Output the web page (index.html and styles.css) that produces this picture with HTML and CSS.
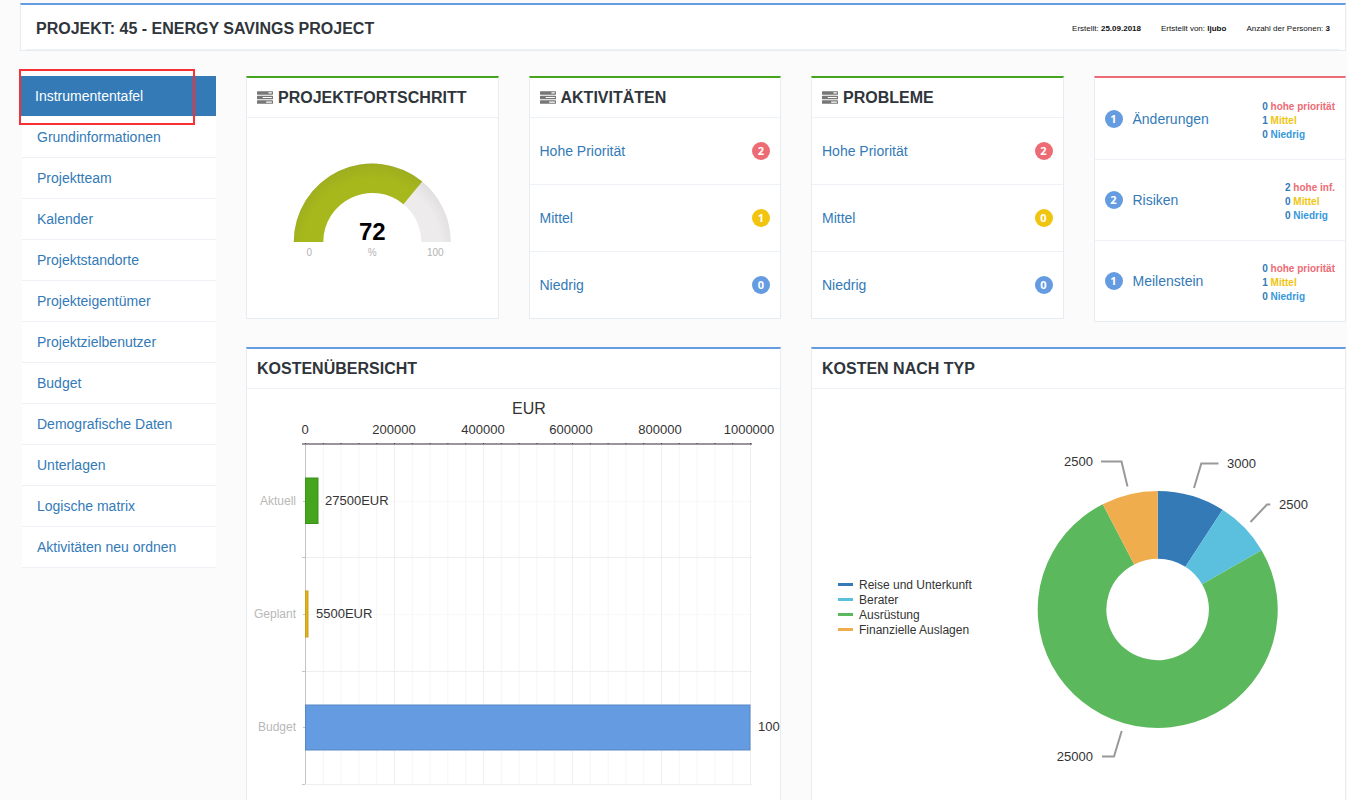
FILE: index.html
```html
<!DOCTYPE html>
<html lang="de">
<head>
<meta charset="utf-8">
<title>Projekt: 45 - Energy Savings Project</title>
<link rel="stylesheet" href="styles.css">
</head>
<body>
<svg class="defs" aria-hidden="true">
  <symbol id="tasks" viewBox="0 128 1792 1408">
    <path fill-rule="evenodd" d="M64 128h1664q64 0 64 64v256q0 64-64 64H64q-64 0-64-64V192q0-64 64-64zM1280 256v128h384V256zM64 640h1664q64 0 64 64v256q0 64-64 64H64q-64 0-64-64V704q0-64 64-64zM640 768v128h1024V768zM64 1152h1664q64 0 64 64v256q0 64-64 64H64q-64 0-64-64v-256q0-64 64-64zM1024 1280v128h640v-128z"/>
  </symbol>
</svg>
<div class="page">
  <header class="card card-blue topbar">
    <div class="topbar-inner">
      <h1 class="title">PROJEKT: 45 - ENERGY SAVINGS PROJECT</h1>
      <div class="meta">
        <span>Erstellt: <b>25.09.2018</b></span>
        <span>Ertstellt von: <b>ljubo</b></span>
        <span>Anzahl der Personen: <b>3</b></span>
      </div>
    </div>
  </header>

  <div class="layout">
    <nav class="menu">
      <a class="menu-item active" href="#">Instrumententafel</a>
      <a class="menu-item" href="#">Grundinformationen</a>
      <a class="menu-item" href="#">Projektteam</a>
      <a class="menu-item" href="#">Kalender</a>
      <a class="menu-item" href="#">Projektstandorte</a>
      <a class="menu-item" href="#">Projekteigentümer</a>
      <a class="menu-item" href="#">Projektzielbenutzer</a>
      <a class="menu-item" href="#">Budget</a>
      <a class="menu-item" href="#">Demografische Daten</a>
      <a class="menu-item" href="#">Unterlagen</a>
      <a class="menu-item" href="#">Logische matrix</a>
      <a class="menu-item" href="#">Aktivitäten neu ordnen</a>
      <div class="highlight"></div>
    </nav>

    <main class="content">
      <div class="summary">
        <section class="card card-green">
          <h2 class="card-title"><svg class="icon"><use href="#tasks"/></svg>PROJEKTFORTSCHRITT</h2>
          <svg class="gauge" viewBox="0 0 250 200">
            <defs>
              <radialGradient id="gaugeFill" gradientUnits="userSpaceOnUse" cx="125" cy="130" r="86">
                <stop offset="0.8" stop-color="#a7b81c"/><stop offset="1" stop-color="#9dac1f"/>
              </radialGradient>
              <radialGradient id="gaugeRest" gradientUnits="userSpaceOnUse" cx="125" cy="130" r="86">
                <stop offset="0.8" stop-color="#edebeb"/><stop offset="1" stop-color="#dfdddc"/>
              </radialGradient>
            </defs>
            <path fill="url(#gaugeRest)" d="M46.500 124A78.500 78.500 0 0 1 203.500 124H174A49 49 0 0 0 76 124Z"/>
            <path fill="url(#gaugeFill)" d="M46.500 124A78.500 78.500 0 0 1 175 63.500L156.200 86.200A49 49 0 0 0 76 124Z"/>
            <text class="gauge-value" x="125" y="122">72</text>
            <text class="gauge-label" x="62" y="138">0</text>
            <text class="gauge-label" x="125" y="138">%</text>
            <text class="gauge-label" x="188" y="138">100</text>
          </svg>
        </section>

        <section class="card card-green">
          <h2 class="card-title"><svg class="icon"><use href="#tasks"/></svg>AKTIVITÄTEN</h2>
          <a class="row" href="#">Hohe Priorität <span class="badge red">2</span></a>
          <a class="row" href="#">Mittel <span class="badge yellow">1</span></a>
          <a class="row" href="#">Niedrig <span class="badge blue">0</span></a>
        </section>

        <section class="card card-green">
          <h2 class="card-title"><svg class="icon"><use href="#tasks"/></svg>PROBLEME</h2>
          <a class="row" href="#">Hohe Priorität <span class="badge red">2</span></a>
          <a class="row" href="#">Mittel <span class="badge yellow">0</span></a>
          <a class="row" href="#">Niedrig <span class="badge blue">0</span></a>
        </section>

        <section class="card card-red">
          <a class="row tall" href="#">
            <span class="badge blue">1</span><span class="row-name">Änderungen</span>
            <span class="levels"><span>0 <i class="t-red">hohe priorität</i></span><span>1 <i class="t-yellow">Mittel</i></span><span>0 <i class="t-blue">Niedrig</i></span></span>
          </a>
          <a class="row tall" href="#">
            <span class="badge blue">2</span><span class="row-name">Risiken</span>
            <span class="levels"><span>2 <i class="t-red">hohe inf.</i></span><span>0 <i class="t-yellow">Mittel</i></span><span>0 <i class="t-blue">Niedrig</i></span></span>
          </a>
          <a class="row tall" href="#">
            <span class="badge blue">1</span><span class="row-name">Meilenstein</span>
            <span class="levels"><span>0 <i class="t-red">hohe priorität</i></span><span>1 <i class="t-yellow">Mittel</i></span><span>0 <i class="t-blue">Niedrig</i></span></span>
          </a>
        </section>
      </div>

      <div class="charts">
        <section class="card card-blue">
          <h2 class="card-title">KOSTENÜBERSICHT</h2>
          <svg class="chart" viewBox="0 0 533 430">
            <defs>
              <pattern id="minor" patternUnits="userSpaceOnUse" x="58" y="0" width="17.800" height="10">
                <rect width="1" height="10" fill="#f5f5f5"/>
              </pattern>
              <pattern id="ticks" patternUnits="userSpaceOnUse" x="58" y="0" width="17.800" height="430">
                <rect width="1" height="430" fill="#444"/>
              </pattern>
            </defs>
            <rect x="58" y="55" width="446" height="340" fill="url(#minor)"/>
            <path class="grid-faint" d="M58 112.500H505M58 225.500H505M58 338.500H505"/>
            <path class="grid-line" d="M147.500 55V395M236.500 55V395M325.500 55V395M414.500 55V395M503.500 55V395M58 168.500H505M58 282.500H505M58 395.500H505"/>
            <path class="axis-left" d="M58.500 55V395M55 168.500H58M55 282.500H58M55 395.500H58M56 112.500H58M56 225.500H58M56 338.500H58"/>
            <rect x="55" y="54" width="450" height="2" fill="#99959b"/>
            <rect x="58" y="54" width="446" height="1" fill="url(#ticks)"/>
            <rect x="58.500" y="89" width="12.500" height="45.500" fill="#45a51f" stroke="#3c921b"/>
            <rect x="58.500" y="202" width="2.500" height="46" fill="#dfb31d" stroke="#c9a01a"/>
            <rect x="58.500" y="316" width="444.500" height="45" fill="#659be0" stroke="#5887c4"/>
            <text class="axis-title" x="282" y="25">EUR</text>
            <g class="num mid">
              <text x="58" y="45">0</text><text x="147" y="45">200000</text><text x="236" y="45">400000</text>
              <text x="324" y="45">600000</text><text x="413" y="45">800000</text><text x="502" y="45">1000000</text>
            </g>
            <g class="cat"><text x="49" y="116">Aktuell</text><text x="49" y="229">Geplant</text><text x="49" y="342">Budget</text></g>
            <g class="num"><text x="78" y="116">27500EUR</text><text x="69" y="229">5500EUR</text><text x="511" y="342">100</text></g>
          </svg>
        </section>

        <section class="card card-blue">
          <h2 class="card-title">KOSTEN NACH TYP</h2>
          <svg class="chart" viewBox="0 0 533 430">
            <path fill="#337ab7" d="M345.700 102A120 118.500 0 0 1 410.600 120.800L373.400 177.800A51.300 50.700 0 0 0 345.700 169.800Z"/>
            <path fill="#5bc0de" d="M410.600 120.800A120 118.500 0 0 1 449.600 161.200L390.100 195.200A51.300 50.700 0 0 0 373.400 177.800Z"/>
            <path fill="#5cb85c" d="M449.600 161.200A120 118.500 0 1 1 290.700 115.200L322.200 175.400A51.300 50.700 0 1 0 390.100 195.200Z"/>
            <path fill="#f0ad4e" d="M290.700 115.200A120 118.500 0 0 1 345.700 102V169.800A51.300 50.700 0 0 0 322.200 175.400Z"/>
            <path class="leader" d="M289 72.500H309.500L315.500 97.500M382 99L389.300 74.500H406.500M438.500 133L455 115.500H458.300M290 367.500H302L309.700 342"/>
            <g class="num end"><text x="281" y="77">2500</text><text x="281" y="372">25000</text></g>
            <g class="num"><text x="415" y="79">3000</text><text x="467" y="120">2500</text></g>
            <path class="key" stroke="#337ab7" d="M26 195.500H41"/>
            <path class="key" stroke="#5bc0de" d="M26 210.500H41"/>
            <path class="key" stroke="#5cb85c" d="M26 225.500H41"/>
            <path class="key" stroke="#f0ad4e" d="M26 240.500H41"/>
            <g class="legend">
              <text x="47" y="200">Reise und Unterkunft</text><text x="47" y="215">Berater</text>
              <text x="47" y="230">Ausrüstung</text><text x="47" y="245">Finanzielle Auslagen</text>
            </g>
          </svg>
        </section>
      </div>
    </main>
  </div>
</div>
</body>
</html>
```
FILE: styles.css
```css
* { box-sizing: border-box; }
body {
  margin: 0;
  background: #fbfbfb;
  color: #2f353b;
  font: 14px/20px "Liberation Sans", Arial, sans-serif;
}
a { color: #337ab7; text-decoration: none; }
.defs { display: block; width: 0; height: 0; }
.page { padding: 3px 1px 20px 20px; }

.card {
  background: #fff;
  border: 1px solid #e7ecf1;
  border-top-width: 2px;
}
.card-blue { border-top-color: #659be0; }
.card-green { border-top-color: #45a51f; }
.card-red { border-top-color: #ed6b75; }

.topbar { padding: 0 5px; }
.topbar-inner {
  display: flex;
  align-items: center;
  justify-content: space-between;
  min-height: 45px;
  padding: 4px 10px 0;
  border-bottom: 1px solid #eef1f5;
}
.title { margin: 0; font-size: 16px; line-height: 20px; }
.meta { display: flex; gap: 20px; font-size: 8px; line-height: 16px; color: #111; }

.layout {
  display: grid;
  grid-template-columns: 196px minmax(0, 1fr);
  gap: 30px;
  margin-top: 25px;
  align-items: start;
}

.menu { position: relative; display: flex; flex-direction: column; padding-left: 2px; }
.menu-item {
  height: 41px;
  padding: 10px 15px;
  background: #fff;
  border-bottom: 1px solid #eef1f5;
}
.menu-item.active {
  height: 40px;
  margin: 0 0 1px -1px;
  padding-left: 14px;
  background: #337ab7;
  border: 0;
  color: #fff;
}
.highlight {
  position: absolute;
  left: -1px;
  top: -7px;
  width: 176px;
  height: 56px;
  border: 2px solid #f83035;
  pointer-events: none;
}

.content { display: flex; flex-direction: column; gap: 25px; }
.summary {
  display: grid;
  grid-template-columns: repeat(4, minmax(0, 1fr));
  gap: 30px;
  align-items: start;
}
.charts {
  display: grid;
  grid-template-columns: repeat(2, minmax(0, 1fr));
  gap: 30px;
}

.card-title {
  display: flex;
  align-items: center;
  gap: 5px;
  height: 40px;
  margin: 0;
  padding: 0 10px;
  border-bottom: 1px solid #eef1f5;
  font-size: 16px;
  line-height: 20px;
}
.icon { width: 16px; height: 13px; fill: #777; }

.row {
  display: flex;
  align-items: center;
  justify-content: space-between;
  height: 67px;
  padding: 0 10px;
  border-bottom: 1px solid #eef1f5;
}
.row:last-child { height: 66px; border-bottom: 0; }
.row.tall { height: 82px; }
.row.tall:nth-child(n+2) { height: 81px; }
.row.tall:last-child { height: 80px; }
.row-name { flex: 1; padding-left: 10px; }
.badge {
  width: 18px;
  height: 18px;
  border-radius: 9px;
  color: #fff;
  font: bold 11px/18px "Open Sans", sans-serif;
  text-align: center;
}
.red { background: #ed6b75; }
.yellow { background: #f1c40f; }
.blue { background: #659be0; }
.levels { display: flex; flex-direction: column; padding-top: 4px; font-size: 10px; line-height: 14px; font-weight: bold; }
.levels i { font-style: normal; }
.t-red { color: #ed6b75; }
.t-yellow { color: #f1c40f; }
.t-blue { color: #3598dc; }

.gauge, .chart { display: block; width: 100%; }
.gauge { height: 200px; }
.gauge-value { font-size: 24px; font-weight: bold; text-anchor: middle; fill: #000; }
.gauge-label { font-size: 10px; text-anchor: middle; fill: #b3b3b3; }

.axis-title { font-size: 16px; text-anchor: middle; fill: #333; }
.num { font-size: 13px; fill: #333; }
.mid { text-anchor: middle; }
.end { text-anchor: end; }
.cat { font-size: 12px; text-anchor: end; fill: #b8b8b8; }
.legend { font-size: 12px; fill: #333; }
.grid-faint { stroke: #f8f8f8; }
.grid-line { stroke: #eee; }
.axis-left { fill: none; stroke: #c4c4c4; }
.leader { fill: none; stroke: #999; stroke-width: 2; }
.key { stroke-width: 3; }
```
